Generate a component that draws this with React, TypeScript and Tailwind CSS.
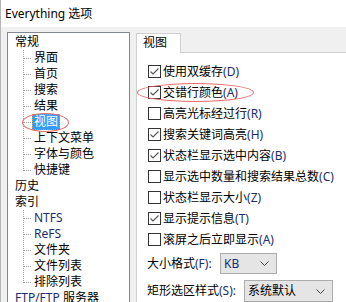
import React from 'react';

const FONT = { fontFamily: '"Noto Sans", "Noto Sans CJK SC", sans-serif' };
const LATIN = 'text-[#1b2d6e]';

type Node = { label: string; latin?: boolean; selected?: boolean; children?: Node[] };

const tree: Node[] = [
  {
    label: '常规',
    children: [
      { label: '界面' },
      { label: '首页' },
      { label: '搜索' },
      { label: '结果' },
      { label: '视图', selected: true },
      { label: '上下文菜单' },
      { label: '字体与颜色' },
      { label: '快捷键' },
    ],
  },
  { label: '历史' },
  {
    label: '索引',
    children: [
      { label: 'NTFS', latin: true },
      { label: 'ReFS', latin: true },
      { label: '文件夹' },
      { label: '文件列表' },
      { label: '排除列表' },
    ],
  },
  { label: 'FTP/FTP 服务器' },
];

const options = [
  { zh: '使用双缓存', key: 'D', checked: true },
  { zh: '交错行颜色', key: 'A', checked: true },
  { zh: '高亮光标经过行', key: 'R', checked: false },
  { zh: '搜索关键词高亮', key: 'H', checked: true },
  { zh: '状态栏显示选中内容', key: 'B', checked: true },
  { zh: '显示选中数量和搜索结果总数', key: 'C', checked: false },
  { zh: '状态栏显示大小', key: 'Z', checked: false },
  { zh: '显示提示信息', key: 'T', checked: true },
  { zh: '滚屏之后立即显示', key: 'A', checked: false },
];

const TreeLabel = ({ node }: { node: Node }) => {
  if (node.label.startsWith('FTP')) {
    return (
      <span className="px-[2px] leading-[16px]">
        <span className={LATIN}>FTP/FTP</span> 服务器
      </span>
    );
  }
  if (node.selected) {
    return (
      <span className="h-[16px] px-[1px] leading-[14px] bg-[#3399ff] text-white border border-dotted border-[#e0a030]">
        {node.label}
      </span>
    );
  }
  return <span className={`px-[2px] leading-[16px] ${node.latin ? LATIN : ''}`}>{node.label}</span>;
};

const Check = ({ checked }: { checked: boolean }) => (
  <span className="w-[13px] h-[13px] border border-[#333] bg-white flex items-center justify-center shrink-0">
    {checked && (
      <svg width="11" height="11" viewBox="0 0 11 11">
        <polyline points="1.5,5.5 4,8 9.5,2.5" fill="none" stroke="#555" strokeWidth="1.1" />
      </svg>
    )}
  </span>
);

const Chevron = () => (
  <svg width="9" height="5" viewBox="0 0 9 5">
    <polyline points="0.5,0.5 4.5,4.5 8.5,0.5" fill="none" stroke="#444" strokeWidth="1" />
  </svg>
);

export default function App() {
  return (
    <div className="relative w-[346px] h-[302px] overflow-hidden bg-[#f0f0f0] text-[12px] text-black border-l border-[#b4b4b4]" style={FONT}>
      {/* 标题栏 */}
      <div className="h-[27px] bg-white flex items-center pl-[4px] text-[12px]">Everything 选项</div>

      <div className="flex pt-[5px] pl-[6px]">
        {/* 左侧树 */}
        <div className="w-[123px] h-[280px] shrink-0 bg-white border border-[#828790] pt-[1px] pl-[5px]">
          {tree.map((node) => (
            <div key={node.label}>
              <div className="h-[16px] flex items-center">
                <TreeLabel node={node} />
              </div>
              {node.children && (
                <div className="relative pl-[19px]">
                  <div
                    className="absolute left-[10px] top-0 border-l border-dotted border-[#a0a0a0]"
                    style={{ height: (node.children.length - 1) * 16 + 9 }}
                  />
                  {node.children.map((c) => (
                    <div key={c.label} className="relative h-[16px] flex items-center">
                      <div className="absolute left-[-9px] top-[8px] w-[8px] border-t border-dotted border-[#a0a0a0]" />
                      <TreeLabel node={c} />
                    </div>
                  ))}
                </div>
              )}
            </div>
          ))}
        </div>

        {/* 右侧选项卡 */}
        <div className="flex-1 ml-[6px] flex flex-col">
          <div className="pt-[1px] flex">
            <div className="relative z-10 h-[20px] w-[45px] bg-white border border-b-0 border-[#d0d0d0] pl-[6px] leading-[18px] -mb-[1px]">
              视图
            </div>
          </div>
          <div className="flex-1 h-[260px] bg-white border-t border-l border-[#d0d0d0] pt-[8px] pl-[11px]">
            {options.map((o, i) => (
              <div key={i} className="h-[21px] flex items-center gap-[2px]">
                <Check checked={o.checked} />
                <span className="whitespace-nowrap">
                  {o.zh}
                  <span className={LATIN}>({o.key})</span>
                </span>
              </div>
            ))}
            <div className="mt-[3px] h-[21px] flex items-center gap-[5px] -ml-[1px]">
              <span className="w-[68px] whitespace-nowrap">
                大小格式<span className={LATIN}>(F):</span>
              </span>
              <div className="w-[57px] h-[21px] bg-[#e5e5e5] border border-[#acacac] flex items-center justify-between pl-[3px] pr-[7px]">
                <span className={LATIN}>KB</span>
                <Chevron />
              </div>
            </div>
            <div className="mt-[6px] h-[22px] flex items-center gap-[5px] -ml-[1px]">
              <span className="w-[92px] whitespace-nowrap">
                矩形选区样式<span className={LATIN}>(S):</span>
              </span>
              <div className="w-[89px] h-[22px] bg-[#e5e5e5] border border-[#acacac] flex items-center justify-between pl-[3px] pr-[7px]">
                <span>系统默认</span>
                <Chevron />
              </div>
            </div>
          </div>
        </div>
      </div>

      {/* 红色标注圈 */}
      <div className="absolute left-[21px] top-[113px] w-[47px] h-[19px] rounded-[50%] border border-[#e86a6a]" />
      <div className="absolute left-[136px] top-[83px] w-[117px] h-[19px] rounded-[50%] border border-[#e86a6a]" />
    </div>
  );
}
